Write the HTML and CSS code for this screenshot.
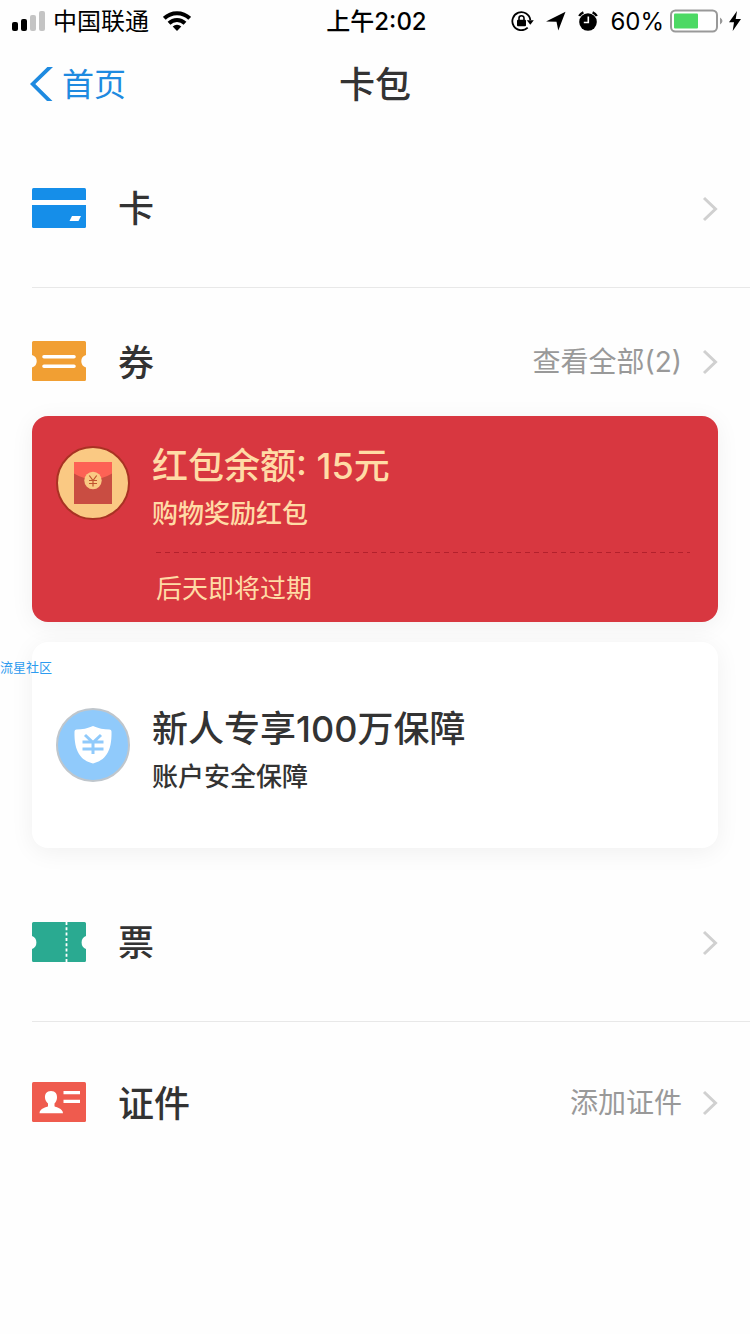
FILE: index.html
```
<!DOCTYPE html>
<html lang="zh-CN">
<head>
<meta charset="utf-8">
<meta name="viewport" content="width=device-width, initial-scale=1">
<title>卡包</title>
<link rel="stylesheet" href="styles.css">
</head>
<body>
<div class="status">
  <div class="status-side">
    <svg class="icon" width="34" height="20" viewBox="0 0 34 20" aria-hidden="true">
      <rect x="0" y="11" width="6" height="9" rx="2"/>
      <rect x="9" y="8" width="6" height="12" rx="2"/>
      <rect x="18" y="4" width="6" height="16" rx="2" fill="#c4c4c4"/>
      <rect x="27" y="0" width="6" height="20" rx="2" fill="#c4c4c4"/>
    </svg>
    <span class="carrier">中国联通</span>
    <svg class="icon wifi" width="28" height="20" viewBox="0 0 28 20" aria-hidden="true">
      <g fill="none" stroke="#000" stroke-width="4">
        <path d="M1.300 7.400a18 18 0 0 1 25.400 0"/>
        <path d="M6 12.200a11.500 11.500 0 0 1 16 0"/>
      </g>
      <path d="M14 20l-4.300-4.500a6.300 6.300 0 0 1 8.600 0z"/>
    </svg>
  </div>
  <span class="time">上午2:02</span>
  <div class="status-side status-right">
    <svg class="icon" width="23" height="20" viewBox="0 0 23 20" aria-hidden="true">
      <path d="M19.300 9.200A9 9 0 1 0 16.700 16.600" fill="none" stroke="#000" stroke-width="1.800"/>
      <path d="M15.800 9.200h7l-3.500 4.600z"/>
      <rect x="6" y="8.800" width="9" height="6.400" rx="1"/>
      <path d="M8 9V7.200a2.500 2.500 0 0 1 5 0V9" fill="none" stroke="#000" stroke-width="1.600"/>
    </svg>
    <svg class="icon" width="20" height="20" viewBox="0 0 20 20" aria-hidden="true">
      <path d="M19.500.8L12.300 19.500l-1.800-8.800L0 10.500z"/>
    </svg>
    <svg class="icon" width="20" height="20" viewBox="0 0 20 20" aria-hidden="true">
      <circle cx="10" cy="11" r="8.800"/>
      <path d="M1.200 5A9 9 0 0 1 5.400 1.300M18.800 5A9 9 0 0 0 14.600 1.300" fill="none" stroke="#000" stroke-width="2.400"/>
      <path d="M10.300 5.500v6H5.800" fill="none" stroke="#fff" stroke-width="1.600"/>
    </svg>
    <span class="percent">60%</span>
    <span class="power">
      <svg class="icon" width="53" height="24" viewBox="0 0 53 24" aria-hidden="true">
        <rect x="1" y="1.500" width="46" height="21" rx="4.500" fill="#fff" stroke="#999" stroke-width="2"/>
        <rect x="4" y="4.500" width="24" height="15" rx="1" fill="#4cd964"/>
        <path d="M50 8.500q5 3.500 0 7z" fill="#999"/>
      </svg>
      <svg class="icon" width="12" height="20" viewBox="0 0 12 20" aria-hidden="true">
        <path d="M8 0L0 11.300h5L3.700 20 12 8H6.700z"/>
      </svg>
    </span>
  </div>
</div>

<header class="nav">
  <a class="back" href="#">
    <svg class="icon" width="23" height="34" viewBox="0 0 23 34" aria-hidden="true">
      <path d="M17.400 0H23L5.300 17 22.500 34H17L0 17z" fill="#1e8ae0"/>
    </svg>
    <span class="back-text">首页</span>
  </a>
  <h1 class="title">卡包</h1>
</header>

<main>
  <a class="row row-line" href="#">
    <svg class="icon" width="54" height="40" viewBox="0 0 54 40" aria-hidden="true">
      <rect width="54" height="40" rx="1.500" fill="#158ee9"/>
      <path d="M0 12h54v5H0z" fill="#fff"/>
      <path d="M40 28h9l-2.500 5h-9z" fill="#fff"/>
    </svg>
    <span class="label">卡</span>
    <svg class="icon chevron" width="16" height="28" viewBox="0 0 16 28" aria-hidden="true"><path d="M2 4l11.500 11L2 26"/></svg>
  </a>

  <section class="coupons">
    <a class="row row-head" href="#">
      <svg class="icon" width="54" height="40" viewBox="0 0 54 40" aria-hidden="true">
        <path d="M1.500 0h51A1.500 1.500 0 0 1 54 1.500V14a6.500 6.500 0 0 0 0 12.500v12a1.500 1.500 0 0 1-1.500 1.500h-51A1.500 1.500 0 0 1 0 38.500v-12a6.500 6.500 0 0 0 0-12.500V1.500A1.500 1.500 0 0 1 1.500 0z" fill="#f19f33"/>
        <path d="M12 15.700h30M12 25.300h30" stroke="#fff" stroke-width="3.600" stroke-linecap="round"/>
      </svg>
      <span class="label">券</span>
      <span class="aside">查看全部(2)</span>
      <svg class="icon chevron" width="16" height="28" viewBox="0 0 16 28" aria-hidden="true"><path d="M2 4l11.500 11L2 26"/></svg>
    </a>

    <div class="cards">
      <article class="card card-red">
        <svg class="icon badge" width="74" height="74" viewBox="0 0 74 74" aria-hidden="true">
          <circle cx="37" cy="37" r="36" fill="#fac983" stroke="#a93223" stroke-width="2"/>
          <rect x="18" y="16" width="38" height="42" fill="#c94d42"/>
          <path d="M18 16h38v11.500Q37 39 18 27.500z" fill="#fd6255"/>
          <circle cx="37" cy="34.500" r="8.700" fill="#fac983"/>
          <path d="M33.300 29.500l3.700 5 3.700-5M33 34.500h8M33 37.500h8M37 34.500v6" fill="none" stroke="#c0522f" stroke-width="1.200"/>
        </svg>
        <div class="card-text">
          <h2 class="card-title">红包余额: 15元</h2>
          <p class="card-sub">购物奖励红包</p>
          <svg class="dash" height="1" aria-hidden="true"><line x1="0" y1="0.500" x2="100%" y2="0.500"/></svg>
          <p class="card-note">后天即将过期</p>
        </div>
      </article>

      <article class="card card-white">
        <svg class="icon badge" width="74" height="74" viewBox="0 0 74 74" aria-hidden="true">
          <circle cx="37" cy="37" r="36" fill="#90cafb" stroke="#bfc6cc" stroke-width="2"/>
          <path d="M37 18q8 3.500 16.500 3.500 2 0 2 2C56 44 49 52.500 37 55.500 25 52.500 18 44 18.500 23.500q0-2 2-2Q29 21.500 37 18z" fill="#fff"/>
          <path d="M29 27l8 7.500 8-7.500M26.500 34h21M26.500 41h21M37 34v12" fill="none" stroke="#90cafb" stroke-width="3"/>
        </svg>
        <div class="card-text">
          <h2 class="card-title">新人专享100万保障</h2>
          <p class="card-sub">账户安全保障</p>
        </div>
      </article>
      <span class="watermark">流星社区</span>
    </div>
  </section>

  <a class="row row-line" href="#">
    <svg class="icon" width="54" height="40" viewBox="0 0 54 40" aria-hidden="true">
      <path d="M1.500 0h51A1.500 1.500 0 0 1 54 1.500V14a7 7 0 0 0 0 13v11.500a1.500 1.500 0 0 1-1.500 1.500h-51A1.500 1.500 0 0 1 0 38.500V27a7 7 0 0 0 0-13V1.500A1.500 1.500 0 0 1 1.500 0z" fill="#2aaa91"/>
      <path d="M34.500 0v40" stroke="#fff" stroke-width="1.800" stroke-dasharray="3 2.300"/>
    </svg>
    <span class="label">票</span>
    <svg class="icon chevron" width="16" height="28" viewBox="0 0 16 28" aria-hidden="true"><path d="M2 4l11.500 11L2 26"/></svg>
  </a>

  <a class="row" href="#">
    <svg class="icon" width="54" height="40" viewBox="0 0 54 40" aria-hidden="true">
      <rect width="54" height="40" rx="1.500" fill="#ef5b4e"/>
      <path d="M19 9c4.500 0 6.300 3 6 7-.2 2.600-1.300 4.200-2.500 5.500v2.700c1 1.200 8.500 1.800 8.500 7H7.500c0-5.200 7.500-5.800 8.500-7v-2.700c-1.200-1.300-2.800-2.900-3-5.500-.3-4 1.500-7 6-7z" fill="#fff"/>
      <path d="M31.500 10.700H48M31.500 19.300H48" stroke="#fff" stroke-width="3.200"/>
    </svg>
    <span class="label">证件</span>
    <span class="aside">添加证件</span>
    <svg class="icon chevron" width="16" height="28" viewBox="0 0 16 28" aria-hidden="true"><path d="M2 4l11.500 11L2 26"/></svg>
  </a>
</main>
</body>
</html>
```
FILE: styles.css
```
* {
  box-sizing: border-box;
}

body {
  margin: 0;
  background: #fefefe;
  color: #333;
  font-family: Inter, "Noto Sans CJK SC", sans-serif;
}

h1,
h2,
p {
  margin: 0;
  font-weight: 500;
}

a {
  color: inherit;
  text-decoration: none;
}

.icon {
  display: block;
  flex: none;
}

/* Status bar */
.status {
  display: grid;
  grid-template-columns: 1fr auto 1fr;
  align-items: center;
  height: 40px;
  padding: 0 9px 0 12px;
  color: #000;
  font-size: 24px;
  line-height: 40px;
}

.status-side {
  display: flex;
  align-items: center;
}

.carrier,
.time,
.percent {
  padding-top: 2px;
}

.carrier {
  margin-left: 7px;
}

.wifi {
  margin-left: 14px;
}

.time {
  font-weight: 500;
}

.status-right {
  justify-content: flex-end;
  gap: 12px;
}

.power {
  display: flex;
  align-items: center;
  gap: 6px;
  margin-left: -6px;
}

/* Navigation bar */
.nav {
  display: grid;
  grid-template-columns: 1fr auto 1fr;
  align-items: center;
  height: 88px;
  padding: 0 30px;
}

.back {
  display: flex;
  align-items: center;
  gap: 9px;
  color: #1e8ae0;
  font-size: 32px;
  line-height: 48px;
}

.back-text,
.title {
  padding-top: 2px;
}

.title {
  font-size: 36px;
  line-height: 48px;
}

/* List rows */
.row {
  display: flex;
  align-items: center;
  height: 160px;
  margin-left: 32px;
  padding-right: 32px;
}

.row-line {
  border-bottom: 1px solid #e8e8e8;
}

.row-head {
  height: 128px;
  padding-top: 18px;
}

.label {
  flex: 1;
  margin-left: 32px;
  padding-top: 3px;
  font-size: 36px;
  font-weight: 500;
  line-height: 48px;
}

.aside {
  margin-right: 20px;
  padding-top: 2px;
  color: #999;
  font-size: 28px;
  line-height: 40px;
}

.chevron {
  fill: none;
  stroke: #d0d0d0;
  stroke-width: 3;
}

/* Coupon cards */
.cards {
  position: relative;
  display: flex;
  flex-direction: column;
  gap: 20px;
  margin-bottom: 14px;
  padding: 0 32px;
}

.card {
  display: flex;
  gap: 22px;
  min-height: 206px;
  padding: 24px 28px 12px 24px;
  border-radius: 16px;
  box-shadow: 0 4px 24px rgba(0, 0, 0, 0.06);
}

.card-red {
  background: #d83740;
  color: #ffdba6;
}

.card-red .badge {
  margin-top: 6px;
}

.card-white {
  align-items: center;
  padding-bottom: 24px;
  background: #fff;
}

.card-white .card-text {
  padding-top: 12px;
}

.card-title {
  font-size: 36px;
  line-height: 52px;
}

.card-sub {
  font-size: 26px;
  line-height: 44px;
}

.card-text {
  flex: 1;
}

.dash {
  display: block;
  width: 100%;
  margin: 16px 0;
  padding-left: 4px;
}

.dash line {
  stroke: #b3202c;
  stroke-width: 1;
  stroke-dasharray: 5 4;
}

.card-note {
  padding-left: 4px;
  font-size: 26px;
  font-weight: 400;
  line-height: 40px;
}

.watermark {
  position: absolute;
  top: 242px;
  left: 0;
  color: #2d9bef;
  font-size: 13px;
  line-height: 18px;
}
```
